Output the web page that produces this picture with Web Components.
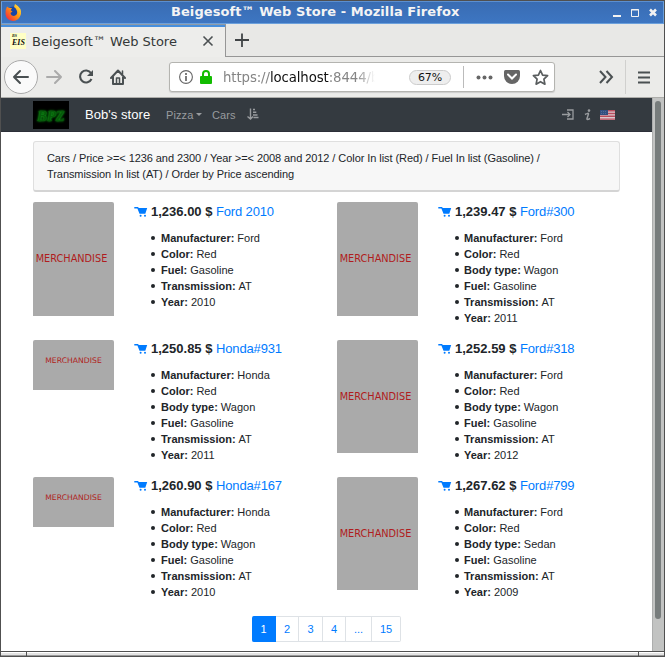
<!DOCTYPE html>
<html lang="en"><head><meta charset="utf-8"><title>Beigesoft™ Web Store</title>
<style>html,body{margin:0;height:657px;overflow:hidden;background:#fff}</style></head><body>
<store-window></store-window>
<script>
const define = (name, render) => customElements.define(name, class extends HTMLElement {
  connectedCallback(){ if(!this.shadowRoot) this.attachShadow({mode:'open'}).innerHTML = '<style>*{box-sizing:border-box}svg{display:block;flex:none}</style>' + render(this); }
});
define('title-bar', () => `<style>
:host{display:flex;box-sizing:border-box;height:23px;border:1px solid #6ba0dc;border-top-color:#5b8fd0;box-shadow:0 1px #484848;background:linear-gradient(#396cb3,#3d76c2);align-items:center;color:#f4f4f4;font:bold 13px "DejaVu Sans",sans-serif}
.fox{margin:0 0 0 3px}.t{margin:0 0 2px 149px;width:290px;white-space:nowrap;flex:none;letter-spacing:.07px}.b{margin-left:152px}</style>
<svg class="fox" width="17" height="17" viewBox="0 0 17 17"><defs><linearGradient id="g" x1="1" y1="0" x2="0" y2="1"><stop stop-color="#fff44f"/><stop offset=".45" stop-color="#ff980e"/><stop offset="1" stop-color="#f0124a"/></linearGradient></defs><circle cx="8.3" cy="9" r="6.5" fill="#1645a5"/><path d="M2 2.5 4 4 7 4 5.700 6.200 7.500 7.400 5.500 9Q6 12 9 12 13 11 12 7 11 4 9 3L10 0Q17 4 16 10 14 17 8 17 1 16 .5 10 0 6 2 2.500Z" fill="url(#g)"/></svg>
<span class="t">Beigesoft™ Web Store - Mozilla Firefox</span>
<svg class="b" width="46" height="10" viewBox="0 0 46 10" fill="none" stroke="#f2f2f2"><path d="M0 8H8" stroke-width="2"/><path d="M18.500 1.500H25.500V8.500H18.500ZM18 2H26" /><path d="m37 1.500 6 6m0-6-6 6" stroke-width="2.500"/></svg>`);
define('tab-strip', () => `<style>
:host{display:flex;height:33px;background:#e8e8e6;color:#343838;font:13px "DejaVu Sans",sans-serif}
.tab{width:225px;display:flex;align-items:center;background:#ededeb;border-right:1px solid #969696;border-top:1px solid #8f9aa5;box-shadow:inset 0 2px #478fdd;padding:0 0 0 9px}
.fav{width:16px;height:16px;background:#ffffc5;color:#111;font:italic bold 8px "Liberation Serif",serif;line-height:19px;padding-left:2px;overflow:hidden;position:relative}.fav small{position:absolute;font-size:4px;line-height:4px;left:2px;top:1px}
.name{margin-left:6px;width:170px;white-space:nowrap}.add{flex:1;border-bottom:1px solid #969696;padding:8px 0 0 8px}</style>
<div class="tab"><span class="fav"><small>BS</small>EIS</span><span class="name">Beigesoft™ Web Store</span><svg width="12" height="12" viewBox="0 0 12 12"><path d="m1.500 1.500 9 9m0-9-9 9" stroke="#4b5052" stroke-width="1.600"/></svg></div>
<div class="add"><svg width="16" height="16"><path d="M8 1.500V15M1 8H15" stroke="#404446" stroke-width="1.800"/></svg></div>`);
define('tool-bar', () => `<style>
:host{display:flex;box-sizing:border-box;height:41px;align-items:center;background:#ebebe9;border-bottom:1px solid #adadaa;padding-left:3px;color:#4a5052}
.back{width:34px;height:34px;border:1px solid #aaa;border-radius:50%;background:#fafafa;display:grid;place-items:center}
.url{margin-left:43px;width:386px;height:30px;border:1px solid #b4b4b0;border-radius:3px;background:#fff;display:flex;align-items:center;padding-left:9px;box-shadow:0 1px 1px #ccc}
.u{margin-left:11px;width:152px;font:13.300px "DejaVu Sans",sans-serif;white-space:nowrap;color:#858585;letter-spacing:-.1px;-webkit-mask:linear-gradient(90deg,#000 88%,transparent 100%)}.u b{font-weight:400;color:#111}
.z{margin-left:34px;width:42px;height:15px;border:1px solid #ccc;border-radius:9px;background:#eee;font:11px/13px "DejaVu Sans",sans-serif;color:#111;text-align:center;letter-spacing:-.1px}
.sep{width:1px;height:22px;background:#bbb;margin:0 12px 0 12px}.sp2{width:1px;height:34px;background:#d0d0ce;margin:0 12px 0 11px}</style>
<div class="back"><svg width="18" height="16" viewBox="0 0 18 16" fill="none" stroke="currentColor" stroke-width="2" stroke-linecap="round" stroke-linejoin="round"><path d="M16 8H2m6-6L2 8l6 6"/></svg></div>
<svg style="margin-left:8px" width="18" height="16" viewBox="0 0 18 16" fill="none" stroke="#aaa" stroke-width="2" stroke-linecap="round" stroke-linejoin="round"><path d="M1 8H15M9 2l6 6-6 6"/></svg>
<svg style="margin-left:14px" width="16" height="16" viewBox="0 0 16 16" fill="none" stroke="currentColor" stroke-width="2.100"><path d="M13 4A6 6 0 1 0 13.500 10"/><path d="M15 1V7H9Z" fill="currentColor" stroke="none"/></svg>
<svg style="margin-left:16px" width="16" height="16" viewBox="0 0 16 16" fill="none" stroke="currentColor" stroke-width="2" stroke-linejoin="round" stroke-linecap="round"><path d="M1 9 8 1.500 15 9M3 8V15H13V8"/><path d="M6.500 14V9H9.500V14M12.500 2V5" stroke-width="1.500"/></svg>
<div class="url"><svg width="14" height="14" viewBox="0 0 14 14" fill="none" stroke="#666"><circle cx="7" cy="7" r="6.400" stroke-width="1.100"/><path d="M7 6V11M7 3V5" stroke-width="1.700"/></svg>
<svg style="margin-left:7px" width="12" height="14"><rect y="6" width="12" height="8" rx="1" fill="#12bc00"/><path d="M3 7V4Q3 1 6 1T9 4V7" fill="none" stroke="#12bc00" stroke-width="2"/></svg>
<span class="u">https://<b>localhost</b>:8444/b</span><span class="z">67%</span><i class="sep"></i>
<svg width="17" height="5" fill="#666"><circle cx="2.500" cy="2.500" r="2"/><circle cx="8.500" cy="2.500" r="2"/><circle cx="14.500" cy="2.500" r="2"/></svg>
<svg style="margin-left:11px" width="16" height="14"><path d="M1.500 0H14.500Q16 0 16 1.500V6A8 8 0 0 1 0 6V1.500Q0 0 1.500 0Z" fill="#666"/><path d="m4 4.500 4 4 4-4" fill="none" stroke="#fff" stroke-width="2" stroke-linecap="round"/></svg>
<svg style="margin-left:12px" width="17" height="17" viewBox="0 0 17 17"><path d="m8.500 1.500 2.100 4.600 5 .6-3.700 3.500 1 5-4.400-2.500-4.400 2.500 1-5L1.400 6.700l5-.6Z" fill="none" stroke="#595d5e" stroke-width="1.700" stroke-linejoin="round"/></svg></div>
<svg style="margin-left:44px" width="15" height="14" viewBox="0 0 15 14" fill="none" stroke="currentColor" stroke-width="2"><path d="m1 1 5.500 6L1 13M7.500 1 13 7l-5.500 6"/></svg><i class="sp2"></i>
<svg width="12" height="13"><path d="M0 1.500H12M0 6.500H12M0 11.500H12" stroke="currentColor" stroke-width="2"/></svg>`);
define('store-nav', () => `<style>
:host{display:flex;box-sizing:border-box;height:34px;background:#343a40;border-bottom:1px solid #2c2f38;align-items:center;padding-left:32px;color:#999c9f;font:11px "Liberation Sans",Arial,sans-serif}
.logo{width:36px;height:28px;background:#000;color:#065a0a;font:italic bold 14.500px/30px "Liberation Serif",serif;text-align:center;text-shadow:0 0 2px #14b01c,0 0 3px #0c8b10}
.brand{color:#fff;font-size:13px;letter-spacing:.05px;width:65px;margin:0 16px;white-space:nowrap}.p{width:27px;letter-spacing:.1px}.c{margin-left:10px;width:35px;letter-spacing:.1px}.car{border:3px solid transparent;border-top-color:currentColor;border-bottom:0;margin-left:3px}</style>
<span class="logo">BPZ</span><span class="brand">Bob's store</span><span class="p">Pizza</span><i class="car"></i><span class="c">Cars</span>
<svg width="12" height="13" fill="none" stroke="currentColor" stroke-width="1.400"><path d="M3.500 .5V11M.5 8.500 3.500 11 6 8.500M6 1.500H8M6 4.300H9.300M6 7H10.500M6.500 9.500H11.500"/></svg>
<svg style="margin-left:303px" width="12" height="11" fill="none" stroke="currentColor" stroke-width="1.300"><path d="M0 5.500H8M5.500 3 8 5.500 5.500 8M5 1H11V10H5"/></svg>
<svg style="margin-left:10px" width="7" height="12" fill="none" stroke="currentColor" stroke-width="1.500"><path d="M1 5.500Q4.500 3.500 4.500 5L3 9.500Q2.500 11.500 6 9.500"/><circle cx="5" cy="1.600" r="1.300" fill="currentColor" stroke="none"/></svg>
<svg style="margin-left:9px" width="15" height="10"><rect width="15" height="10" fill="#d9c9ce"/><path d="M0 .7H15M0 3.500H15M0 6.300H15M0 9.100H15" stroke="#b94c5c" stroke-width="1.400"/><rect width="8" height="5" fill="#334f80"/><path d="M1 1.500H7M1 3.500H7" stroke="#526a96" stroke-dasharray="1 1"/></svg>`);
define('filter-card', () => `<style>:host{display:block;box-sizing:border-box;margin:9px 0 0 32px;width:587px;height:51px;padding:8px 13px;border:1px solid #dfdfdf;border-bottom:2px solid #d4d4d4;border-radius:3px;background:#f7f7f7;font:11px/16px "Liberation Sans",Arial,sans-serif;letter-spacing:-.07px;color:#212529;white-space:nowrap}</style><slot></slot>`);
define('store-product', e => {
  const a = n => e.getAttribute(n), small = a('img')==='small', first = a('name')==='Ford 2010'||a('name')==='Ford#300', h = small?50:first?114:113;
  const rows=[['Manufacturer',a('maker')],['Color','Red'],...(a('body')?[['Body type',a('body')]]:[]),['Fuel','Gasoline'],['Transmission','AT'],['Year',a('year')]];
  return `<style>:host{display:flex;color:#212529;font:11px/16px "Liberation Sans",Arial,sans-serif;white-space:nowrap}
.pic{width:81px;height:${h}px;background:#aaa;border-radius:2px 2px 0 0;color:#b01c20;display:grid;place-items:center;font:${small?'7.700':'9.750'}px "DejaVu Sans",sans-serif;flex:none;${small?'padding-bottom:9px':'padding:0 4px 1px 0'}}
.txt{margin-left:20px;flex:1}.h{display:flex;align-items:center;height:${first?19:17}px;font-size:13px}.h b{margin:0 4px 0 3px;width:61px}.h span{color:#007bff;letter-spacing:-.15px}
ul{list-style:none;margin:${first?9:10}px 0 0 17px;padding:0}li{display:flex;align-items:center;gap:3px;height:16px}li:before{content:"";width:4px;height:4px;border-radius:50%;background:#212529;margin-right:${a('side')==='right'?2:3}px}</style>
<div class="pic">MERCHANDISE</div><div class="txt"><div class="h"><svg width="14" height="12" viewBox="0 0 14 12" fill="#007bff"><path d="M.3 1H4L4.800 2H13.200L11.300 7.800H5.500L3.400 2.600H.3Z"/><circle cx="6.600" cy="9.700" r="1"/><circle cx="11" cy="9.700" r="1"/></svg><b>${a('price')} $</b><span>${a('name')}</span></div>
<ul>${rows.map(r=>`<li><b>${r[0]}:</b><span>${r[1]}</span></li>`).join('')}</ul></div>`;
});
define('store-pager', () => `<style>:host{display:flex;margin-left:251px;width:149px;height:26px;font:11px/24px "Liberation Sans",Arial,sans-serif;color:#007bff}
span{border:1px solid #dee2e6;border-left:0;text-align:center;flex:none}span:first-of-type{background:#007bff;border-color:#007bff;color:#fff;border-radius:2px 0 0 2px}span:last-child{border-radius:0 2px 2px 0}</style>
${[['1',24],['2',23],['3',24],['4',23],['...',26],['15',29]].map(x=>`<span style="width:${x[1]}px">${x[0]}</span>`).join('')}`);
define('store-window', () => `<style>
:host{display:block;box-sizing:border-box;width:665px;height:657px;border:1px solid #505050}
.view{height:553px;display:flex;background:#fff;overflow:hidden}.page{width:651px;flex:none}.scroll{flex:1;background:#c2c3c2;border-left:1px solid #adaeae;padding:3px 3px 0 2px}.scroll i{display:block;height:518px;background:#777c7c;border-radius:3px}
.grid{display:grid;grid-template-columns:304px 304px;grid-template-rows:138px 137px 139px;margin:10px 0 0 32px}
.foot{height:5px;border-top:1px solid #505050;background:linear-gradient(#fff 1px,#e3e3e3 1px 3px,#999 3px);display:flex;justify-content:space-between;padding:0 25px}.foot i{width:1px;background:#505050}</style>
<title-bar></title-bar><tab-strip></tab-strip><tool-bar></tool-bar>
<div class="view"><div class="page"><store-nav></store-nav><filter-card>Cars / Price &gt;=&lt; 1236 and 2300 / Year &gt;=&lt; 2008 and 2012 / Color In list (Red) / Fuel In list (Gasoline) /<br>Transmission In list (AT) / Order by Price ascending</filter-card>
<div class="grid">
<store-product price="1,236.00" name="Ford 2010" maker="Ford" year="2010"></store-product>
<store-product side="right" price="1,239.47" name="Ford#300" maker="Ford" body="Wagon" year="2011"></store-product>
<store-product img="small" price="1,250.85" name="Honda#931" maker="Honda" body="Wagon" year="2011"></store-product>
<store-product side="right" price="1,252.59" name="Ford#318" maker="Ford" body="Wagon" year="2012"></store-product>
<store-product img="small" price="1,260.90" name="Honda#167" maker="Honda" body="Wagon" year="2010"></store-product>
<store-product side="right" price="1,267.62" name="Ford#799" maker="Ford" body="Sedan" year="2009"></store-product>
</div><store-pager></store-pager></div><div class="scroll"><i></i></div></div>
<div class="foot"><i></i><i></i></div>`);
</script></body></html>
